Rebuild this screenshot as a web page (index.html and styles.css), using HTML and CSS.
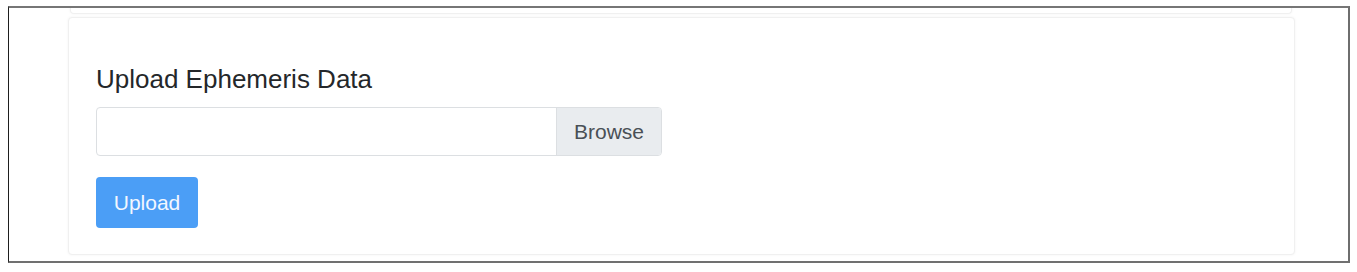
FILE: index.html
```html
<!DOCTYPE html>
<html lang="en">
<head>
<meta charset="utf-8">
<title>Upload Ephemeris Data</title>
<link rel="stylesheet" href="styles.css">
</head>
<body>
<div class="frame">
  <div class="card card-prev"></div>
  <div class="card card-main">
    <h4 class="title">Upload Ephemeris Data</h4>
    <div class="file-input">
      <div class="file-name"></div>
      <div class="file-browse">Browse</div>
    </div>
    <button class="btn-upload" type="button">Upload</button>
  </div>
</div>
</body>
</html>
```

FILE: styles.css
```css
html, body {
  margin: 0;
  padding: 0;
  background: #ffffff;
}
body {
  font-family: "Liberation Sans", Arial, sans-serif;
  width: 1357px;
  height: 272px;
  overflow: hidden;
}
.frame {
  box-sizing: border-box;
  margin: 6px 7px 0 8px;
  height: 257px;
  border-top: 2px solid #767676;
  border-left: 1px solid #1e1e1e;
  border-right: 2px solid #6e6e6e;
  border-bottom: 2px solid #707070;
  background: #ffffff;
  display: flex;
  flex-direction: column;
  overflow: hidden;
}
.card {
  box-sizing: border-box;
  background: #ffffff;
  border: 1px solid #f0f0f0;
  border-radius: 4px;
  box-shadow: 0 0 3px rgba(0, 0, 0, 0.05);
}
.card-prev {
  flex: none;
  height: 8px;
  margin: -2px 56px 0 61px;
  border-top: none;
  border-radius: 0 0 4px 4px;
}
.card-main {
  flex: none;
  margin: 3px 53px 0 59px;
  height: 238px;
  padding: 47px 27px 0 27px;
}
.title {
  margin: 0 0 13px 0;
  font-size: 26px;
  font-weight: 400;
  line-height: 29px;
  color: #24272a;
}
.file-input {
  box-sizing: border-box;
  width: 566px;
  height: 49px;
  border: 1px solid #dcdfe2;
  border-radius: 4px;
  display: flex;
  overflow: hidden;
}
.file-name {
  flex: 1;
}
.file-browse {
  flex: none;
  display: flex;
  align-items: center;
  padding: 0 17px 0 17px;
  background: #e9ecef;
  border-left: 1px solid #dcdfe2;
  color: #4a5056;
  font-size: 21px;
}
.btn-upload {
  margin-top: 21px;
  box-sizing: border-box;
  height: 51px;
  width: 102px;
  padding: 0;
  border: none;
  border-radius: 4px;
  background: #4b9ef6;
  color: #f2f7ff;
  font-family: "Liberation Sans", Arial, sans-serif;
  font-size: 21px;
  display: block;
}
```
